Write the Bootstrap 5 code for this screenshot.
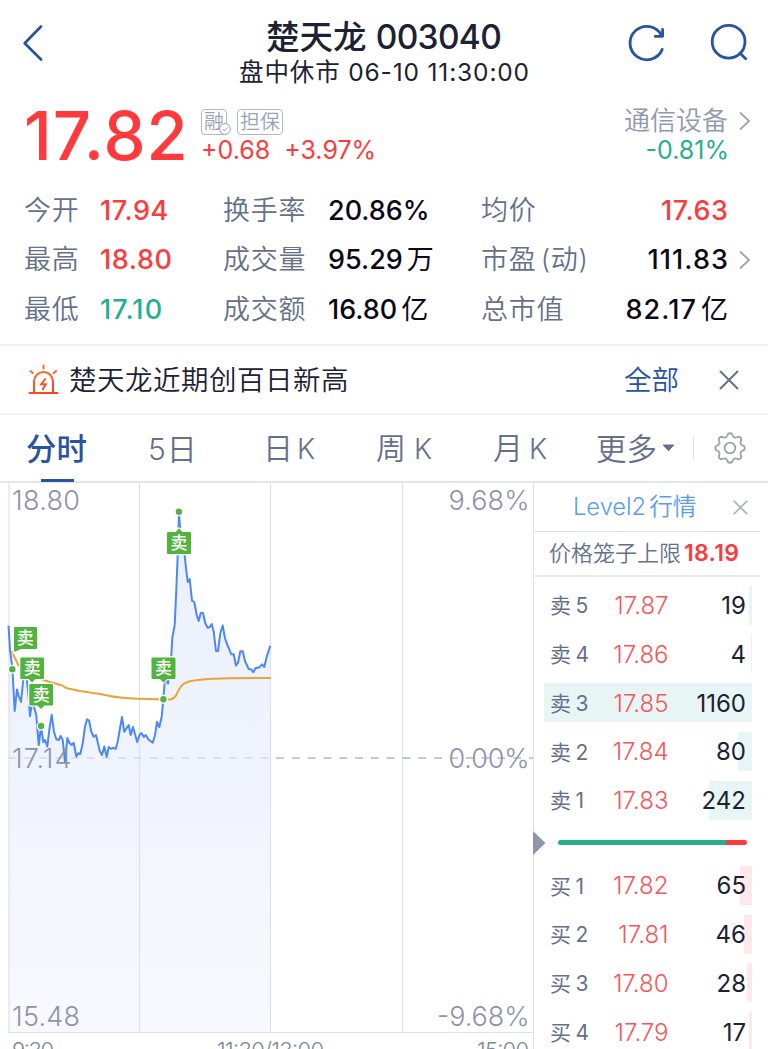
<!DOCTYPE html>
<html lang="zh-CN">
<head>
<meta charset="utf-8">
<meta name="viewport" content="width=device-width, initial-scale=1">
<title>楚天龙 003040</title>
<link href="https://cdn.jsdelivr.net/npm/bootstrap@5.3.0/dist/css/bootstrap.min.css" rel="stylesheet">
<style>
  :root { --ink:#1c2233; --slate:#66708a; --mute:#9298af; --up:#ff3a3d; --down:#27ad90; --brand:#2753a3; }
  html, body { height:1049px; overflow:hidden; }
  body { font-family:Inter,"Noto Sans CJK SC",sans-serif; color:var(--ink); background:#fff; }
  svg { display:block; flex:none; }
  .up { color:var(--up); } .down { color:var(--down); } .mute { color:var(--mute); }
  .topbar { display:grid; grid-template-columns:1fr auto 1fr; height:94px; padding:17px 19px 0 22px; }
  .stock-name { font-size:33.5px; line-height:40px; font-weight:500; letter-spacing:.1px; padding-right:4px; }
  .stock-name .code { letter-spacing:-.7px; }
  .stock-time { font-size:24.5px; line-height:30px; letter-spacing:.85px; margin:0 -3px 0 -5px; }
  .quote { height:92px; padding:0 16px 0 24px; }
  .last-price { font-size:67px; line-height:84px; font-weight:500; letter-spacing:1px; width:177px; }
  .tags { height:26px; gap:10px; margin-top:15px; }
  .tag-box { border:1.5px solid #b1b5cd; border-radius:4px; color:#9a9fba; font-size:20px; font-weight:350; line-height:24px; height:26px; width:46px; text-align:center; white-space:nowrap; }
  .tag-box.short { width:26px; }
  .tag-check { right:-5px; bottom:-1px; }
  .delta { font-size:25px; line-height:30px; }
  .sector { font-size:26px; font-weight:350; line-height:30px; }
  .stats { padding:0 16px 0 24px; height:158px; }
  .stat-row { display:grid; grid-template-columns:76px 123px 105px 153px 1fr 24px; height:49.3px; line-height:49.3px; font-size:27px; font-weight:500; color:#0c0817; }
  .stat-row .lbl { color:var(--slate); font-weight:350; letter-spacing:.7px; word-spacing:-4px; }
  .stat-row .wide { letter-spacing:.6px; margin-right:-.6px; }
  .stat-row .wider { letter-spacing:1.1px; margin-right:-1.1px; }
  .cn { margin-left:4px; font-weight:400; }
  .alert-row { height:71px; border-top:2px solid #f1f1f3; border-bottom:2px solid #f1f1f3; padding:0 29px 0 28px; font-size:27.5px; font-weight:350; }
  .alert-row > span { padding-top:2px; }
  .tabs { height:68px; font-size:30px; font-weight:350; line-height:68px; color:var(--slate); border-bottom:2px solid #e4e5ea; padding-left:26px; }
  .tabs > span { padding-top:1px; }
  .tabs .on { color:var(--brand); font-weight:500; font-size:30.5px; }
  .tabs .on::after { content:""; position:absolute; left:15px; bottom:1px; width:33px; height:3px; background:var(--brand); }
  .tabs .k { font-size:28px; margin-left:8px; }
  .chart-col { width:533px; }
  .book { width:227px; border-left:1px solid #e0e1ea; }
  .book-head { height:49px; border-bottom:1px solid #e2e3eb; padding:0 12px 0 39px; font-size:23.7px; font-weight:350; color:#5a9cf3; }
  .cage { height:45px; border-bottom:2px solid #e8e9ef; padding-left:15px; font-size:22px; font-weight:350; color:var(--slate); }
  .cage b { font-size:23px; margin-left:3px; letter-spacing:.3px; }
  .lvl { height:48.75px; margin:0 8px 0 9px; padding:0 6px 0 7px; }
  .lvl > span { position:relative; padding-top:2px; }
  .lvl .tagname { width:50px; font-size:21px; color:var(--slate); word-spacing:-1.5px; }
  .lvl .prc { width:68.5px; text-align:right; font-size:24px; font-weight:350; color:#f95558; }
  .lvl .qty { flex:1; text-align:right; font-size:24px; }
  .lvl .depth { position:absolute; right:0; top:5px; height:39px; }
  .sell { background:#e8f5f5; } .buy { background:#ffe8ea; }
  .power { height:5px; margin:0 13px 0 24px; border-radius:3px; overflow:hidden; }
</style>
</head>
<body>
<header class="topbar">
  <svg width="24" height="44" viewBox="0 0 24 44" fill="none" stroke="#2753a3" stroke-width="2.7" stroke-linecap="round" stroke-linejoin="round"><path d="M19 9.500 2.700 26.300 19 42.500"/></svg>
  <div class="text-center text-nowrap">
    <div class="stock-name">楚天龙 <span class="code">003040</span></div>
    <div class="stock-time">盘中休市 06-10 11:30:00</div>
  </div>
  <div class="d-flex justify-content-end">
    <svg width="124" height="54" viewBox="0 0 124 54" fill="none" stroke="#2753a3" stroke-width="2.8" stroke-linecap="round" stroke-linejoin="round">
      <path d="M36.500 18.300A16.700 16.700 0 1 0 37.200 32.400"/><path d="M37.600 12.500V19.300H30.200"/>
      <circle cx="103.600" cy="24.700" r="16.400"/><path d="m115 36.200 5.700 5.500"/>
    </svg>
  </div>
</header>

<section class="quote d-flex">
  <div class="last-price up">17.82</div>
  <div class="flex-grow-1">
    <div class="tags d-flex">
      <div class="tag-box short position-relative">融
        <svg class="tag-check position-absolute" width="12" height="12" viewBox="0 0 12 12" fill="#fff" stroke="#9a9fba"><circle cx="6" cy="6" r="5.400"/><path d="m3.500 6 2 2 3.200-3.600" fill="none"/></svg>
      </div>
      <div class="tag-box">担保</div>
    </div>
    <div class="delta up text-nowrap"><span>+0.68</span><span style="margin-left:14px">+3.97%</span></div>
  </div>
  <div class="text-end">
    <div class="sector mute d-flex align-items-center" style="margin:12px 0 -1px">通信设备
      <svg class="ms-2" width="16" height="20" viewBox="0 0 16 20" fill="none" stroke="#9da2b5" stroke-width="1.800"><path d="m4 1.500 9 8.500-9 8.500"/></svg>
    </div>
    <div class="delta down" style="margin-right:23px">-0.81%</div>
  </div>
</section>

<section class="stats text-nowrap">
  <div class="stat-row"><span class="lbl">今开</span><span class="up wide">17.94</span><span class="lbl">换手率</span><span>20.86%</span><span class="d-flex justify-content-between"><span class="lbl">均价</span><span class="up wide">17.63</span></span></div>
  <div class="stat-row"><span class="lbl">最高</span><span class="up wide">18.80</span><span class="lbl">成交量</span><span>95.29<span class="cn">万</span></span><span class="d-flex justify-content-between"><span class="lbl">市盈 (动)</span><span class="wider">111.83</span></span>
    <svg class="align-self-center ms-2" width="16" height="20" viewBox="0 0 16 20" fill="none" stroke="#9da2b5" stroke-width="1.800"><path d="m4 1.500 9 8.500-9 8.500"/></svg></div>
  <div class="stat-row"><span class="lbl">最低</span><span class="down wider">17.10</span><span class="lbl">成交额</span><span>16.80<span class="cn">亿</span></span><span class="d-flex justify-content-between"><span class="lbl">总市值</span><span class="wider">82.17<span class="cn">亿</span></span></span></div>
</section>

<section class="alert-row d-flex align-items-center">
  <svg width="32" height="32" viewBox="0 0 32 32" fill="none" stroke="url(#hot)" stroke-width="2" stroke-linecap="round">
    <defs><linearGradient id="hot" gradientUnits="userSpaceOnUse" x1="0" y1="0" x2="12" y2="32"><stop stop-color="#ff7a2c"/><stop offset="1" stop-color="#f8451f"/></linearGradient></defs>
    <path d="M1.500 29H29.500M6 29V17.500a9.500 9.500 0 0 1 19 0V29M15.500 1.500v3M2.500 7l2.300 2M28 7l-2.300 2"/><path d="m17.200 15-4 5.200h4.600l-3 5"/>
  </svg>
  <span class="flex-grow-1" style="margin-left:9px;letter-spacing:.5px">楚天龙近期创百日新高</span>
  <span style="color:#2753a3;margin-right:40px">全部</span>
  <svg width="20" height="20" viewBox="0 0 20 20" stroke="#66708a" stroke-width="2" stroke-linecap="round"><path d="m1.500 1.500 17 17m0-17-17 17"/></svg>
</section>

<nav class="tabs d-flex align-items-center text-nowrap">
  <span class="on position-relative" style="width:122px">分时</span>
  <span style="width:115px">5<span style="margin-left:1px">日</span></span>
  <span style="width:113px">日<span class="k" style="margin-left:4px">K</span></span>
  <span style="width:117px">周<span class="k">K</span></span>
  <span style="width:103px">月<span class="k" style="margin-left:6px">K</span></span>
  <span style="font-size:30.500px">更多</span>
  <svg style="margin-left:5px" width="13" height="8" viewBox="0 0 13 8"><path d="M1.200 1h10.600L6.500 6.800z" fill="#66708a" stroke="#66708a" stroke-linejoin="round"/></svg>
  <svg style="margin-left:17px" width="58" height="34" viewBox="-38 -17 58 34" fill="none" stroke="#9ba1b2" stroke-width="1.800">
    <path d="M-36.500-12V12" stroke="#dedfe7" stroke-width="1"/>
    <g id="tooth4"><g id="tooth2"><g id="tooth1"><path id="tooth" d="M-2.660-12.500A2.700 2.700 0 0 1 2.660-12.500A3.200 3.200 0 0 0 6.970-10.730"/><use href="#tooth" transform="rotate(45)"/></g><use href="#tooth1" transform="rotate(90)"/></g><use href="#tooth2" transform="rotate(180)"/></g>
    <circle r="5.300"/>
  </svg>
</nav>

<main class="d-flex">
  <div class="chart-col">
    <svg width="533" height="566" viewBox="0 483 533 566" fill="none" font-family="Inter,'Noto Sans CJK SC',sans-serif">
      <defs>
        <linearGradient id="area" x1="0" y1="0" x2="0" y2="1"><stop stop-color="#eaf0fc"/><stop offset=".45" stop-color="#eff3fc"/><stop offset="1" stop-color="#f8f9fe"/></linearGradient>
      </defs>
      <path id="fillArea" fill="url(#area)"/>
      <path d="M9 482V1032M139.500 482V1032M270.500 482V1032M402.500 482V1032" stroke="#e0e2eb" stroke-width="1.200"/>
      <path d="M8 1032.500H533" stroke="#e0e2ec" stroke-width="1.200"/>
      <path d="M7.700 758H271" stroke="#d6dae7" stroke-width="1.500" stroke-dasharray="7.900 7.900"/>
      <path d="M276.100 758H533" stroke="#b2b8ca" stroke-width="1.500" stroke-dasharray="7.900 7.900"/>
      <path id="priceLine" stroke="#4b87f6" stroke-width="2" stroke-linejoin="round"/>
      <path d="M11.700 650.700L15 658.300L18.300 665Q28 676 44 680C52 684 58 683 63.300 686Q65 688 68 688.500L80 691L100 694Q112 697 125 698T150 699L163 699.500H170Q174 699 176 695.500C181 685 183 683.500 187 682.200C195 679.500 215 678.500 230 678.300L270.700 678" stroke="#eda338" stroke-width="2"/>
      <g fill="#51b43c" stroke="#fff" stroke-width="2.500" paint-order="stroke">
        <path d="M14.500 627H36q1 0 1 1V648q0 1-1 1H21L14 652V628q0-1 .5-1z"/>
        <path d="M21.300 657.500H43q1 0 1 1V678q0 1-1 1H35.500L32 682.500 28.500 679H21.300q-1 0-1-1V658.500q0-1 1-1z"/>
        <path d="M30.300 684H52q1 0 1 1V704.500q0 1-1 1H44.500L41 709 37.500 705.500H30.300q-1 0-1-1V685q0-1 1-1z"/>
        <path d="M168 532H175.500L179 528.500 182.500 532H190q1 0 1 1V553q0 1-1 1H168q-1 0-1-1V533q0-1 1-1z"/>
        <path d="M152.500 657.500H174.500q1 0 1 1V678q0 1-1 1H167L163.500 682.500 160 679H152.500q-1 0-1-1V658.500q0-1 1-1z"/>
        <circle cx="12.300" cy="669.300" r="3.200"/><circle cx="41" cy="726" r="3.200"/><circle cx="163.400" cy="699.300" r="3.200"/><circle cx="178.900" cy="511.700" r="3.200"/>
      </g>
      <g fill="#fff" font-size="17" font-weight="500" text-anchor="middle">
        <text x="25.200" y="644">卖</text><text x="32.200" y="674">卖</text><text x="41.200" y="700.500">卖</text><text x="179" y="549">卖</text><text x="163.500" y="674">卖</text>
      </g>
      <g fill="#8e93ac" font-size="27" font-weight="300">
        <text x="12" y="510" textLength="68">18.80</text>
        <text x="12" y="768" textLength="59.500">17.14</text>
        <text x="12" y="1026" textLength="68">15.48</text>
        <text x="448.500" y="510" textLength="81">9.68%</text>
        <text x="448.500" y="768" textLength="81">0.00%</text>
        <text x="437" y="1026" textLength="92.500">-9.68%</text>
      </g>
      <g fill="#7e869c" font-size="22" font-weight="300">
        <text x="12" y="1058" textLength="42">9:30</text>
        <text x="217" y="1058" textLength="107">11:30/13:00</text>
        <text x="477" y="1058" textLength="52">15:00</text>
      </g>
    </svg>
  </div>

  <aside class="book position-relative text-nowrap">
    <div class="book-head d-flex align-items-center justify-content-between"><span>Level2<span style="margin-left:3px">行情</span></span>
      <svg width="15" height="15" viewBox="0 0 15 15" stroke="#a6aabd" stroke-width="1.600"><path d="m.7.7 13.600 13.600m0-13.600L.7 14.300"/></svg></div>
    <div class="cage d-flex align-items-center">价格笼子上限<b class="up fw-semibold">18.19</b></div>
    <div id="asks" style="padding-top:3.700px"></div>
    <div class="d-flex flex-column justify-content-center" style="height:36.500px">
      <div class="power d-flex"><div style="width:88.700%;background:#27ad90"></div><div class="flex-grow-1" style="background:#ff3a3d"></div></div>
    </div>
    <div id="bids"></div>
    <svg class="position-absolute" style="left:-1px;top:347px" width="13" height="26" viewBox="0 0 13 26"><path d="M0 1 12.500 13 0 25z" fill="#9096aa"/></svg>
  </aside>
</main>

<script src="https://cdn.jsdelivr.net/npm/bootstrap@5.3.0/dist/js/bootstrap.bundle.min.js"></script>
<script>
  const prices = [[8.5,625.7],[10,650],[12.3,667],[14.7,711],[17,689.5],[18.7,696],[21,702],[23.3,679],[25,668],[26.7,679],[28.3,693],[30,716],[32.3,700],[34,707],[36.3,715],[38.7,745],[41,727],[43.3,742],[45,740],[47.3,746.5],[49.7,726.7],[51.7,714.8],[54,731.7],[56.3,739.3],[58.7,740],[60.7,736],[62.7,740],[65,762.5],[67.3,738],[69.3,742.7],[71.7,745],[73.7,742.7],[76.3,756.5],[78.3,753.3],[80.3,754],[82.7,743.3],[85,726.7],[87,719.3],[89,720.5],[91.3,731.7],[93.7,736.7],[96,735],[99.7,750.7],[102,755],[104.3,746.5],[106.7,756.8],[108.7,747],[111,748.7],[113,748],[115.7,748.7],[117.7,741.7],[119.7,730],[122,717],[124.3,731.7],[128.7,725],[130.7,735],[133,727],[137.2,742],[139.5,735],[141.5,733],[143.8,737],[145.8,735],[148.3,739.3],[152.7,742.7],[155,735],[157,722],[159.3,727],[161.7,716.7],[163.3,699.3],[164.7,682],[166.3,680],[168,683.5],[169.7,674],[171.3,655],[172.3,638],[174.7,625],[176.3,590],[177.7,555],[179,514],[180.3,530],[182.5,545],[184.7,556],[186,568],[187.7,582],[189.7,579],[192,600.7],[194.3,602],[196.7,615],[198.7,621],[200.7,613],[203,613],[205.3,623.3],[207.7,627.7],[209.7,627],[211.7,624],[213.7,631.7],[216,651],[218,651],[220.3,633.3],[222.7,625.5],[225,638.3],[227.7,645.7],[231.3,654.3],[233.7,654.3],[236,665.5],[238,662.7],[240.3,651.3],[242.7,651.3],[245,661],[248.7,669],[251,669.3],[253.3,672.2],[255.3,668.3],[259.3,667.3],[262,664.3],[264.3,667],[266.7,656.7],[270.3,645.7]];
  const line = 'M' + prices.map(p => p.join(' ')).join('L');
  document.getElementById('priceLine').setAttribute('d', line);
  document.getElementById('fillArea').setAttribute('d', line + 'V1032H8.5Z');

  const row = (side, [name, price, qty, depth]) => `<div class="lvl d-flex align-items-center position-relative">
    <div class="depth ${side}" style="width:${depth}px"></div>
    <span class="tagname">${name}</span><span class="prc">${price}</span><span class="qty">${qty}</span></div>`;
  const asks = [['卖 5','17.87',19,3],['卖 4','17.86',4,1],['卖 3','17.85',1160,208.5],['卖 2','17.84',80,14],['卖 1','17.83',242,43]];
  const bids = [['买 1','17.82',65,12],['买 2','17.81',46,8.5],['买 3','17.80',28,5],['买 4','17.79',17,3]];
  document.getElementById('asks').innerHTML = asks.map(r => row('sell', r)).join('');
  document.getElementById('bids').innerHTML = bids.map(r => row('buy', r)).join('');
</script>
</body>
</html>
